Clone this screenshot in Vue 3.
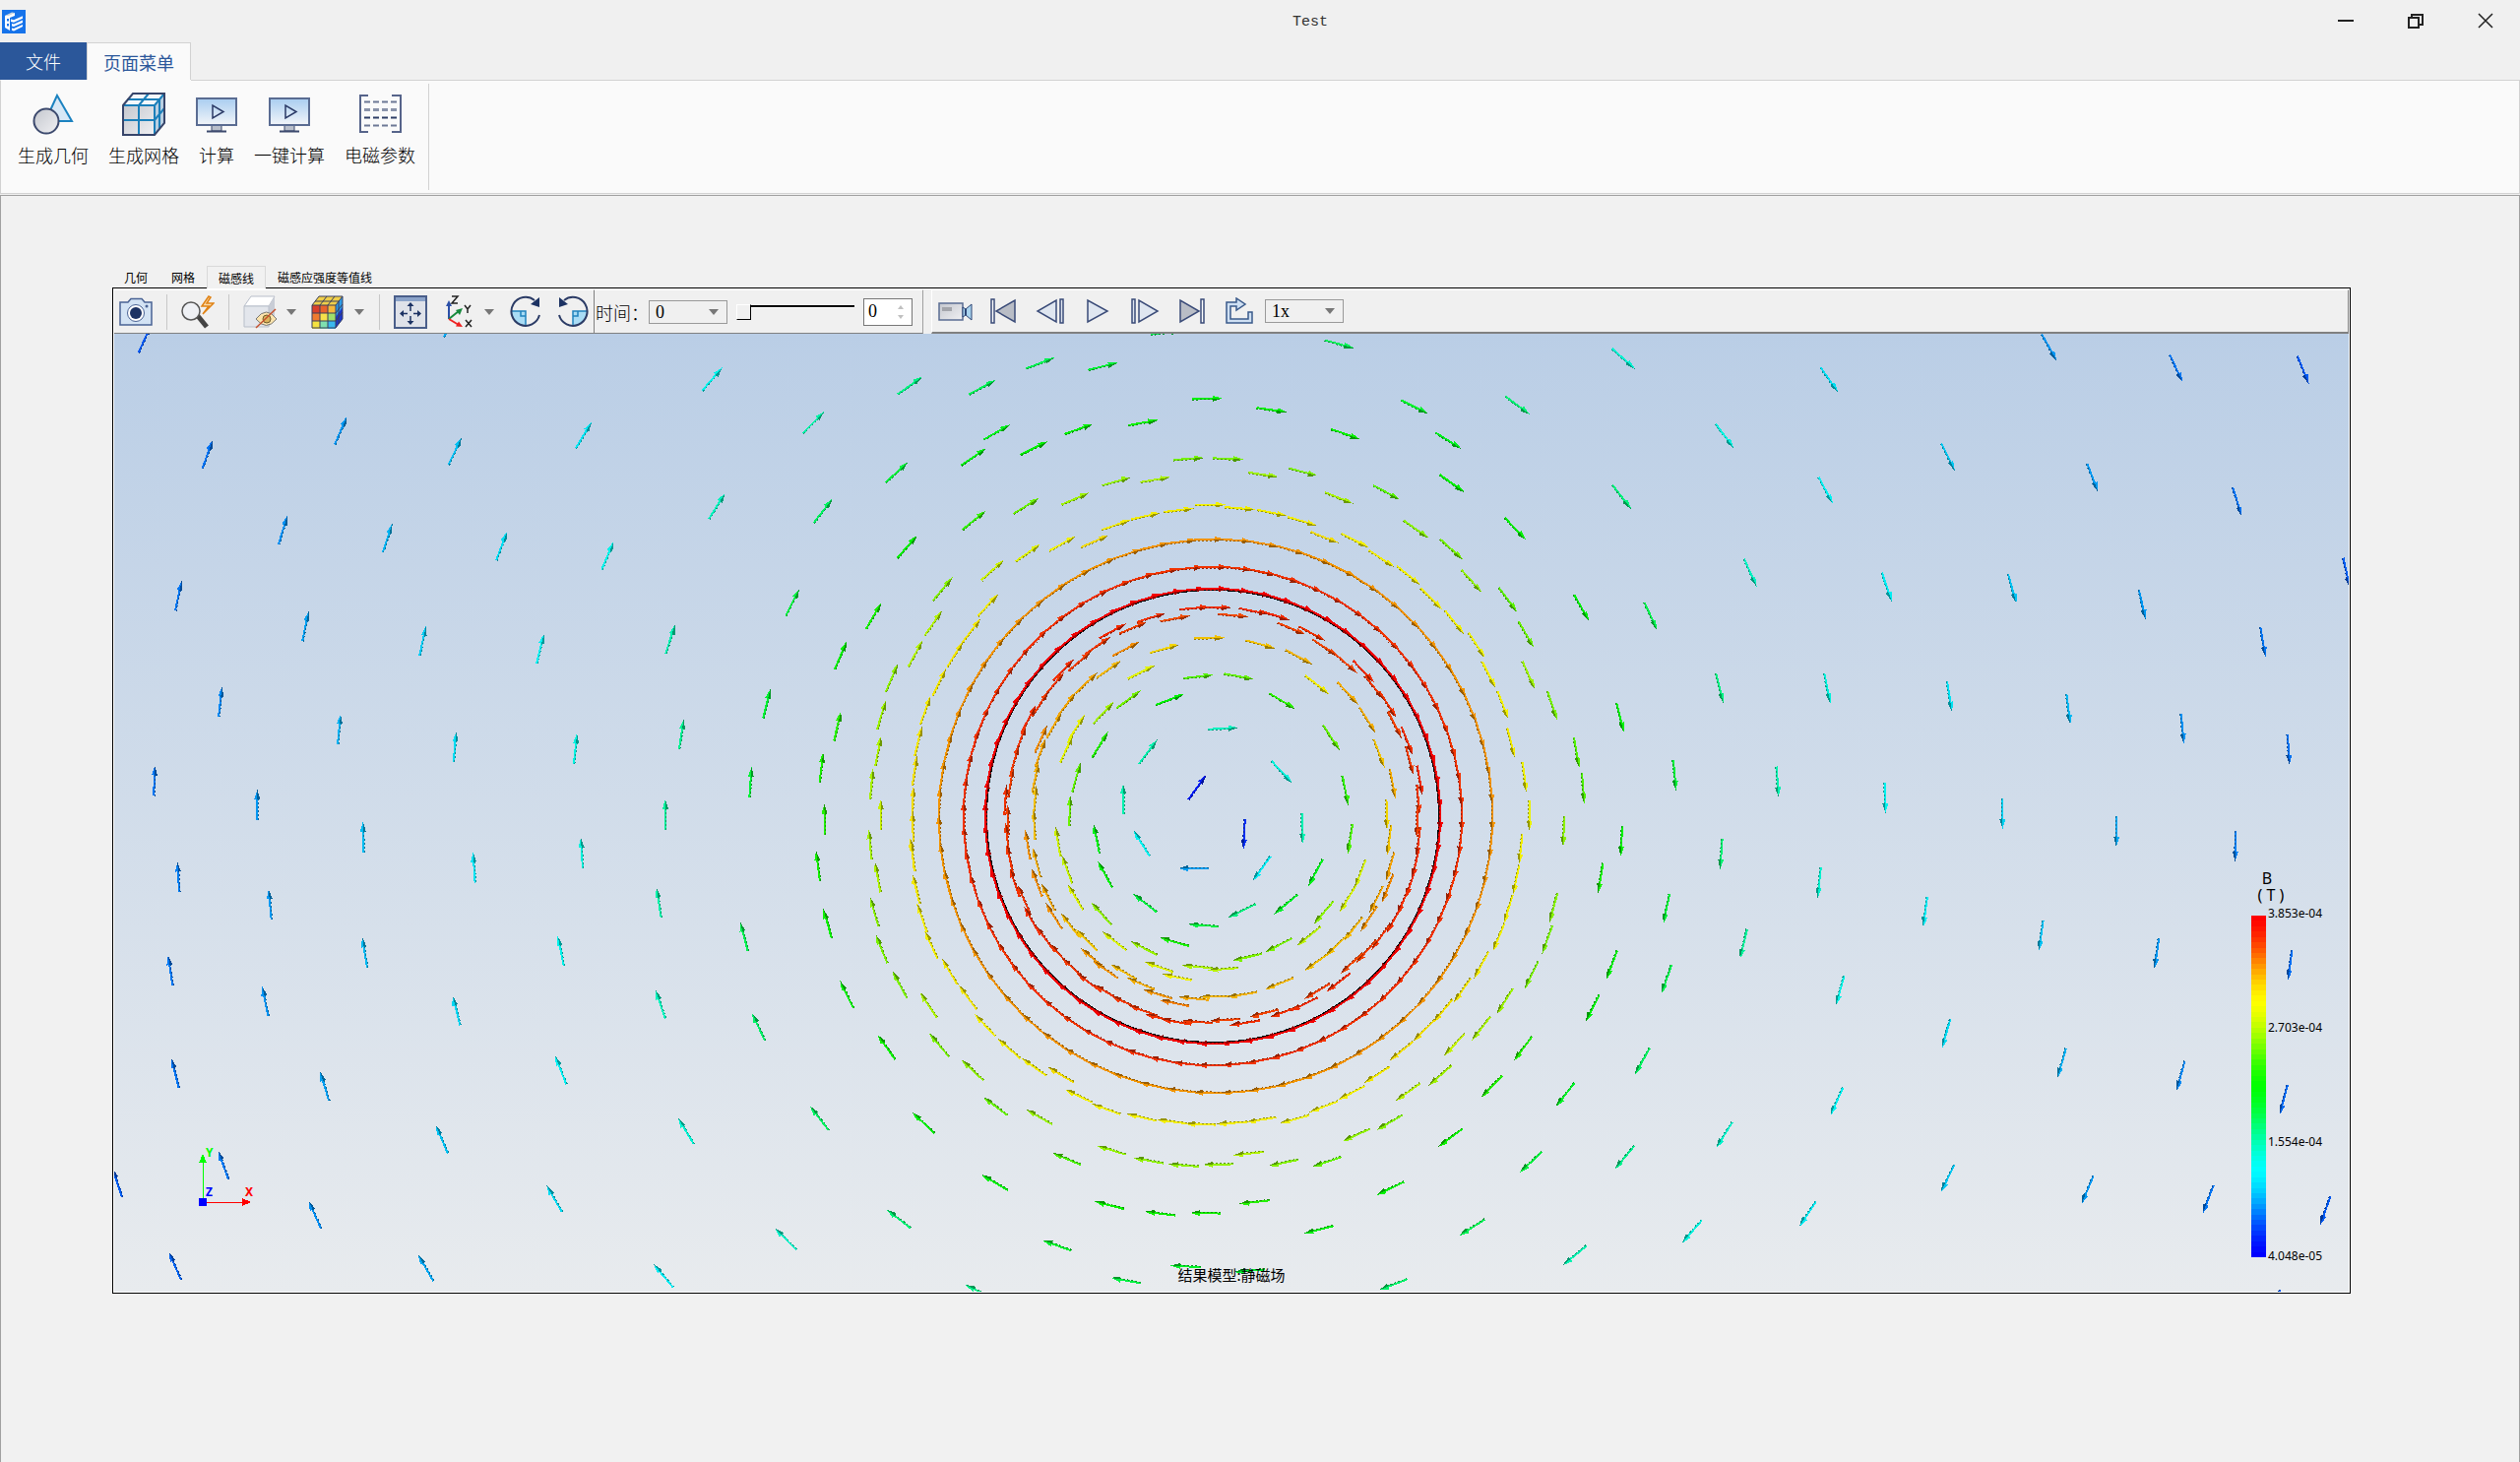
<script setup>
import { ref } from 'vue'

const tabs = ['几何', '网格', '磁感线', '磁感应强度等值线']
const activeTab = ref('磁感线')
const time = ref('0')
const frame = ref(0)
const speed = ref('1x')

const CX = 1232
const CY = 829
const CORE = 231
const B_MAX = 3.853
const B_MIN = 0.405

const stops = [[0, 0, 255], [0, 255, 255], [0, 255, 0], [255, 255, 0], [255, 0, 0]]

function ramp(v, shade = 1) {
  const t = Math.min(0.9999, Math.max(0, v)) * 4
  const i = Math.floor(t)
  const f = (t - i + (1 - Math.cos(Math.PI * (t - i))) / 2) / 2
  const c = stops[i].map((a, k) => Math.round((a + (stops[i + 1][k] - a) * f) * shade))
  return `rgb(${c.join(',')})`
}

// Flux density of a round conductor: grows inside, falls off as 1/r outside,
// with a slightly flattened peak at the surface.
function level(r) {
  const b = r < CORE ? (B_MAX * r) / CORE : (B_MAX * CORE) / r
  const v = (b - B_MIN) / (B_MAX - B_MIN)
  return v > 0.5 ? v + 0.055 * Math.sin(Math.PI * (v - 0.5) * 2) : v
}

function arrow(x, y, deg, cx = CX) {
  const dx = x - cx
  const dy = y - CY
  const a = deg === undefined ? (Math.atan2(dx, -dy) * 180) / Math.PI : deg
  const v = level(Math.hypot(dx, dy))
  return {
    at: `translate(${x.toFixed(1)} ${y.toFixed(1)}) rotate(${a.toFixed(1)})`,
    lit: ramp(v, 0.95),
    dark: ramp(v, 0.6)
  }
}

const rings = [
  { r: 281, n: 63, cx: 1235 },
  { r: 253, n: 64, cx: 1232 },
  { r: 231, n: 64, cx: 1232 }
]

// Sample points by patch: x, y pairs relative to the patch origin.
const patches = [
  {
    x: 880, y: 450, k: 1 / 3,
    pts: [92, 90, 326, 43, 510, 16, 982, 48, 328, 236, 487, 192, 636, 170, 762, 117, 880, 112, 124, 317, 22, 528,
      232, 446, 204, 550, 149, 643, 77, 717, 46, 830, 36, 940, 16, 1040, 44, 1133, 12, 1225, 384, 388, 492, 335,
      597, 307, 695, 300, 760, 250, 850, 223, 950, 205, 370, 495, 320, 572, 270, 645, 222, 730, 180, 815, 158, 910,
      147, 1000, 142, 1095, 142, 1170, 140, 1250, 868, 532, 812, 563, 940, 535, 1000, 503, 750, 573, 705, 617,
      650, 665, 600, 692, 573, 735, 530, 795, 495, 840, 470, 905, 452, 965, 440, 1035, 424, 1090, 432, 1150,
      430, 1205, 790, 628, 738, 690, 670, 732, 610, 797, 572, 860, 532, 903, 530, 945, 515, 1020, 514, 1090,
      512, 1165, 492, 1225, 908, 627, 838, 698, 640, 868, 610, 933, 1010, 712, 924, 782, 798, 782, 722, 823,
      712, 920, 640, 1020, 620, 1122, 584, 1215, 702, 1207]
  },
  {
    x: 1220, y: 450, k: 1 / 3,
    pts: [82, 48, 188, 96, 310, 88, 420, 167, 565, 150, 764, 122, 655, 262, 763, 323, 957, 260, 824, 420, 935, 477,
      991, 583, 998, 706, 1070, 798, 27, 188, 118, 199, 215, 212, 308, 238, 376, 287, 468, 296, 550, 352, 632, 403,
      702, 474, 772, 545, 840, 615, 877, 705, 920, 797, 945, 912, 986, 1017, 1001, 1133, 45, 501, 97, 525,
      160, 512, 225, 525, 275, 565, 338, 580, 378, 623, 440, 670, 495, 695, 528, 745, 570, 797, 590, 857, 628, 906,
      636, 967, 667, 1027, 662, 1085, 659, 1155, 663, 1215, 25, 594, 180, 613, 298, 652, 353, 736, 447, 762,
      507, 843, 543, 945, 584, 1037, 566, 1130, 574, 1210, 115, 711, 247, 786, 397, 897, 440, 1058, 455, 1205]
  },
  {
    x: 880, y: 830, k: 1 / 3,
    pts: [35, 185, 25, 290, 47, 403, 103, 512, 190, 573, 223, 695, 325, 772, 395, 882, 528, 914, 62, 702, 175, 932,
      612, 1042, 748, 1015, 862, 1047, 968, 1061, 393, 1114, 742, 1183, 897, 1208, 1035, 1207, 583, 1306, 100, 1225,
      975, 1369, 792, 1412, 345, 1446, 142, 120, 152, 220, 170, 308, 198, 390, 255, 472, 310, 550, 363, 635,
      435, 705, 512, 762, 593, 785, 648, 850, 732, 890, 840, 915, 932, 928, 1020, 936, 438, 130, 452, 200, 480, 250,
      505, 315, 545, 370, 590, 420, 630, 460, 680, 505, 735, 535, 790, 565, 845, 590, 895, 612, 945, 624, 1010, 624,
      520, 140, 520, 200, 555, 245, 572, 302, 622, 330, 672, 375, 690, 430, 730, 465, 785, 472, 838, 508, 890, 540,
      940, 567, 1000, 553, 1065, 547, 612, 160, 638, 245, 717, 295, 757, 378, 847, 400, 893, 457, 948, 488,
      1010, 456, 940, 380, 1030, 330, 728, 175, 850, 262]
  },
  {
    x: 1220, y: 830, k: 1 / 3,
    pts: [350, 168, 260, 265, 238, 390, 142, 427, 375, 290, 330, 362, 70, 463, 486, 172, 447, 250, 465, 340, 415, 390,
      355, 440, 240, 507, 127, 541, 577, 150, 570, 215, 535, 250, 512, 310, 655, 140, 640, 200, 617, 255, 590, 310,
      548, 365, 505, 408, 460, 445, 420, 503, 355, 530, 315, 570, 255, 593, 192, 598, 135, 627, 75, 618, 975, 95,
      961, 190, 937, 280, 908, 365, 855, 450, 797, 527, 738, 590, 680, 650, 612, 712, 537, 785, 460, 840, 375, 882,
      287, 920, 185, 922, 95, 932, 1075, 275, 1056, 372, 1008, 480, 927, 560, 855, 643, 773, 693, 730, 787, 632, 837,
      576, 930, 475, 968, 385, 1050, 253, 1053, 147, 1025, 55, 1058, 982, 705, 887, 820, 762, 976, 1007, 1050,
      578, 1131, 164, 1173, 360, 1257, 827, 1250, 587, 1424, 150, 1382]
  },
  {
    x: 0, y: 0, k: 80 / 49,
    pts: [90, 211, 129, 283, 212, 268, 283, 281, 363, 271, 443, 236, 506, 263, 281, 202, 176, 330, 241, 335, 312, 340,
      378, 346, 446, 315, 512, 318, 111, 371, 190, 390, 263, 399, 336, 404, 417, 398, 493, 375, 137, 437, 211, 454,
      283, 465, 358, 466, 424, 457, 477, 438, 521, 452, 96, 486, 160, 501, 226, 521, 295, 540, 362, 531, 414, 507,
      467, 487, 511, 478, 513, 510, 523, 408, 111, 546, 168, 563, 106, 604, 165, 623, 227, 593, 284, 629, 349, 592,
      410, 562, 463, 583, 411, 625, 472, 639, 509, 539, 515, 575, 527, 619, 349, 666, 202, 676, 109, 668, 275, 709,
      427, 704, 510, 696, 345, 746, 489, 771, 265, 789, 413, 794, 73, 736, 139, 725, 196, 756, 109, 788, 566, 240,
      611, 241, 647, 226, 686, 228, 725, 207, 833, 214, 751, 248, 791, 255, 711, 263, 671, 267, 620, 269, 880, 253,
      837, 270, 944, 252, 1010, 223, 901, 274, 1138, 236, 1275, 216, 1354, 229, 1433, 230, 1073, 271, 1212, 284,
      1302, 297, 1392, 312, 1136, 305, 1009, 309, 1089, 356, 1174, 365, 1252, 366, 1333, 376, 1460, 356, 1408, 399,
      984, 378, 1027, 383, 1070, 428, 1137, 428, 1213, 433, 1287, 441, 1358, 453, 1424, 466, 1008, 446, 981, 468,
      1042, 482, 1106, 486, 1173, 496, 1246, 506, 1317, 517, 1391, 526, 985, 490, 1009, 523, 1071, 531, 973, 517,
      996, 546, 1132, 549, 1198, 567, 1270, 582, 1342, 593, 1425, 600, 1037, 565, 1085, 587, 1145, 616, 1211, 643,
      1283, 661, 1357, 669, 1421, 684, 1037, 609, 1003, 600, 991, 627, 1022, 660, 974, 681, 1143, 685, 1073, 706,
      1011, 720, 1212, 733, 1299, 740, 1374, 746, 1447, 753, 1125, 755, 1053, 766, 980, 781, 1415, 811]
  }
]

// Near the axis the direction no longer follows the circles.
const core = [
  [1216, 800, -54], [1166, 764, -53], [1141, 812, -90], [1160, 857, -122], [1242, 740, -3], [1302, 784, 47],
  [1323, 841, 89], [1264, 847, 93], [1282, 882, 126], [1262, 925, 154], [1213, 882, 180]
]

const arrows = []
for (const { r, n, cx } of rings) {
  for (let i = 0; i < n; i++) {
    const a = (i * 2 * Math.PI) / n
    arrows.push(arrow(cx + r * Math.cos(a), CY + r * Math.sin(a), undefined, cx))
  }
}
for (const { x, y, k, pts } of patches) {
  for (let i = 0; i < pts.length; i += 2) arrows.push(arrow(x + pts[i] * k, y + pts[i + 1] * k))
}
for (const [x, y, deg] of core) arrows.push(arrow(x, y, deg))

const BANDS = 64
const bands = Array.from({ length: BANDS }, (_, i) => ({
  y: 930 + Math.round((i * 347) / BANDS),
  h: Math.round(((i + 1) * 347) / BANDS) - Math.round((i * 347) / BANDS),
  fill: ramp(1 - i / (BANDS - 1))
}))
const ticks = [
  { y: 932, text: '3.853e-04' },
  { y: 1048, text: '2.703e-04' },
  { y: 1164, text: '1.554e-04' },
  { y: 1280, text: '4.048e-05' }
]

const heat = ['#d9402c', '#e8622c', '#f6b93b', '#ef7a30', '#f7e04a', '#9fe06a', '#f5e23f', '#7fe0b0', '#39b8ee']
const cells = heat.map((fill, i) => ({ x: 1 + (i % 3) * 8, y: 10 + Math.floor(i / 3) * 8, fill }))
</script>

<template>
  <div class="window">
    <header class="titlebar">
      <svg class="logo" width="24" height="24" viewBox="0 0 24 24">
        <rect width="24" height="24" fill="#1673ea" />
        <path d="M3 6 13 3v3L8 8l0 13-5-3z" fill="#fff" />
        <path d="M3 6l7-3.500 3 .5-6 3z" fill="#cfd6dc" />
        <path d="M5 9h2v2.500H5zM5 14h2v2.500H5z" fill="#1673ea" />
        <path d="M9 9.500l3 .8 9-4v2.500l-9 4-3-.8zM10 14l2 .6 9-4v2.500l-9 4-2-.6zM10 18.500l2 .6 9-4v2L12 21.500l-2-.8z" fill="#fff" />
      </svg>
      <h1>Test</h1>
      <div class="controls">
        <button type="button" aria-label="最小化">
          <svg width="18" height="18" viewBox="0 0 18 18"><path d="M1 8h16" stroke="#222" stroke-width="2" /></svg>
        </button>
        <button type="button" aria-label="还原">
          <svg width="18" height="18" viewBox="0 0 18 18" fill="none" stroke="#222" stroke-width="2">
            <path d="M2 5h10v10H2zM5 5V2h11v10h-4" />
          </svg>
        </button>
        <button type="button" aria-label="关闭">
          <svg width="18" height="18" viewBox="0 0 18 18"><path d="M2 1l14 14M16 1 2 15" stroke="#222" stroke-width="1.500" /></svg>
        </button>
      </div>
    </header>

    <nav class="menubar">
      <button type="button" class="menu-file">文件</button>
      <button type="button" class="menu-page">页面菜单</button>
      <span class="menu-rest"></span>
    </nav>

    <div class="ribbon">
      <div class="ribbon-group">
        <button type="button">
          <svg width="44" height="44" viewBox="0 0 44 44">
            <defs>
              <linearGradient id="gray" x1="0" y1="0" x2="1" y2="1">
                <stop offset="0" stop-color="#c4c7ce" /><stop offset="1" stop-color="#f0f0f3" />
              </linearGradient>
              <linearGradient id="sky" x1="0" y1="0" x2="0" y2="1">
                <stop offset="0" stop-color="#a9cdf0" /><stop offset="1" stop-color="#f2f5f9" />
              </linearGradient>
            </defs>
            <path d="M26 3 41 29H14z" fill="#d8e8f6" stroke="#1b82c0" stroke-width="2" />
            <circle cx="15" cy="29" r="12.500" fill="url(#gray)" stroke="#3d4a6e" stroke-width="2" />
          </svg>
          <span>生成几何</span>
        </button>
        <button type="button">
          <svg width="44" height="44" viewBox="0 0 44 44">
            <path d="M1 13 11 1h32L33 13z" fill="#f4f8fb" />
            <path d="M33 13 43 1v30L33 43z" fill="#b9cfe2" />
            <path d="M1 13h32v30H1z" fill="url(#gray)" />
            <path d="M1 13h32M5 7h33M17 13 27 1M17 13v30M1 28h32L43 16M33 13v30M33 13 43 1M38 7v30" fill="none" stroke="#1b7fba" stroke-width="2" />
            <path d="M1 13 11 1h32v30L33 43H1z" fill="none" stroke="#37456a" stroke-width="2" />
          </svg>
          <span>生成网格</span>
        </button>
        <button v-for="name in ['计算', '一键计算']" :key="name" type="button">
          <svg width="44" height="44" viewBox="0 0 44 44">
            <path d="M17 33h10v6H17z" fill="#b9bfcb" stroke="#3d4a6e" />
            <rect x="2" y="6" width="40" height="27" fill="url(#sky)" stroke="#5a6c92" stroke-width="2" />
            <path d="M18 13v13l11-6.500z" fill="none" stroke="#2b3a66" stroke-width="1.500" />
            <path d="M12 39.500h20" stroke="#3d4a6e" stroke-width="2" />
          </svg>
          <span>{{ name }}</span>
        </button>
        <button type="button">
          <svg width="44" height="44" viewBox="0 0 44 44" fill="none" stroke="#56648a">
            <path d="M10 3H2v37h8M34 3h9v37h-9" stroke-width="2" />
            <path d="M6 9.500h34M6 33.500h34" stroke-width="2" stroke-dasharray="6 3" stroke="#6d7895" />
            <path d="M6 17.500h34" stroke-width="3" stroke-dasharray="6 3" stroke="#8a93aa" />
            <path d="M6 25.500h34" stroke-width="2" stroke-dasharray="6 3" stroke="#2f3e66" />
          </svg>
          <span>电磁参数</span>
        </button>
      </div>
    </div>

    <main class="workspace">
      <div class="tabs" role="tablist">
        <button
          v-for="tab in tabs"
          :key="tab"
          type="button"
          role="tab"
          :aria-selected="tab === activeTab"
          :class="{ active: tab === activeTab }"
          @click="activeTab = tab"
        >{{ tab }}</button>
      </div>

      <section class="viewer">
        <div class="toolbar">
          <div class="bar bar-view">
            <button type="button" class="tool" aria-label="截图">
              <svg width="34" height="30" viewBox="0 0 34 30">
                <path d="M1 5h8l3-3.500h11L26 5h7v23H1z" fill="#d3e3f4" stroke="#4a6394" stroke-width="1.500" />
                <circle cx="17" cy="16" r="8.500" fill="#fff" stroke="#4a6394" />
                <circle cx="17" cy="16" r="6" fill="#1c3263" />
                <circle cx="28" cy="9" r="1.500" fill="#4a6394" />
              </svg>
            </button>
            <i class="sep"></i>
            <button type="button" class="tool" aria-label="快速查询">
              <svg width="34" height="34" viewBox="0 0 34 34">
                <path d="M17 21 26 32" stroke="#444" stroke-width="5" />
                <circle cx="10" cy="16" r="9" fill="#eef0f4" stroke="#555" stroke-width="1.500" />
                <path d="M28 1 21 11h7l-6 8 11-11h-7l4-6z" fill="#fbd9a8" stroke="#e08214" stroke-width="1.500" />
              </svg>
            </button>
            <i class="sep"></i>
            <button type="button" class="tool" aria-label="隐藏">
              <svg width="34" height="34" viewBox="0 0 34 34">
                <path d="M1 11 8 1h24l-6 10z" fill="#fff" stroke="#b9bfca" />
                <path d="M26 11 32 1v22l-6 9z" fill="#c9cdd6" />
                <path d="M1 11h25v21H1z" fill="#e3e6ec" stroke="#b9bfca" />
                <path d="M13 24q10.500-14 21 0-10.500 13-21 0z" fill="#fbe3ac" stroke="#777" />
                <circle cx="24" cy="24" r="4" fill="#dcb45c" stroke="#6d5a2c" />
                <path d="M13 33 33 14" stroke="#c5512e" stroke-width="1.500" />
              </svg>
            </button>
            <button type="button" class="caret" aria-label="隐藏选项"></button>
            <button type="button" class="tool gap-s" aria-label="云图">
              <svg width="34" height="34" viewBox="0 0 34 34">
                <path d="M1 10 8 1h24l-7 9z" fill="#f0cf4a" />
                <path d="M25 10 32 1v23l-7 9z" fill="#2f9be6" />
                <path d="M25 22 32 12v12l-7 9z" fill="#1d37c9" />
                <rect v-for="(c, i) in cells" :key="i" :x="c.x" :y="c.y" width="8" height="8" :fill="c.fill" />
                <path d="M1 10v23h24l7-9V1H8zM1 10h24V33M25 10l7-9M9 10l7-9M17 10l7-9M4 6h24v23M1 18h24l7-9M1 26h24l7-9M9 10v23M17 10v23" fill="none" stroke="#3b3f5c" />
              </svg>
            </button>
            <button type="button" class="caret" aria-label="云图选项"></button>
            <i class="sep tight"></i>
            <button type="button" class="tool" aria-label="适应窗口">
              <svg width="34" height="34" viewBox="0 0 34 34">
                <rect x="1" y="1" width="32" height="32" fill="#dfe2e9" stroke="#4a5e8a" stroke-width="2" />
                <path d="M2 4h30" stroke="#8ba3c9" stroke-width="4" />
                <path d="M17 9v7M17 21v7M7 18.500h7M20 18.500h7" stroke="#1c3263" stroke-width="1.500" />
                <path d="M17 7l-3.500 4h7zM17 30l-3.500-4h7zM6 18.500l4-3.500v7zM28 18.500l-4-3.500v7z" fill="#1c3263" />
              </svg>
            </button>
            <button type="button" class="tool gap" aria-label="视角">
              <svg width="34" height="34" viewBox="0 0 34 34">
                <path d="M8 24V8" stroke="#2a4fa8" stroke-width="2" /><path d="M8 5l-3 6h6z" fill="#2a4fa8" />
                <path d="M8 24 18 16" stroke="#178a3c" stroke-width="2" /><path d="M22 13l-3 7-4-5z" fill="#178a3c" />
                <path d="M8 24l10 6" stroke="#e22" stroke-width="2" /><path d="M22 32l-7-.5 3-5z" fill="#e22" />
                <path d="M11 1h6l-6 7h6M24 10l3 4 3-4M27 14v4M25 25l6 7M31 25l-6 7" fill="none" stroke="#222" stroke-width="1.500" />
              </svg>
            </button>
            <button type="button" class="caret" aria-label="视角选项"></button>
            <button type="button" class="tool gap-s" aria-label="顺时针旋转">
              <svg width="34" height="34" viewBox="0 0 34 34">
                <path d="M17 16v15A14 14 0 0 1 3 16z" fill="#a9dcf5" />
                <path d="M3 16h14v15M12 16v5h5" fill="none" stroke="#2182bd" stroke-width="1.500" />
                <path d="M26 5A14.500 14.500 0 1 0 31 20" fill="none" stroke="#2c3c66" stroke-width="2" />
                <path d="M31 2v10l-9-3z" fill="#1c3263" />
              </svg>
            </button>
            <button type="button" class="tool gap" aria-label="逆时针旋转">
              <svg width="34" height="34" viewBox="0 0 34 34">
                <path d="M17 16v15A14 14 0 0 0 31 16z" fill="#a9dcf5" />
                <path d="M31 16H17v15M22 16v5h-5" fill="none" stroke="#2182bd" stroke-width="1.500" />
                <path d="M8 5A14.500 14.500 0 1 1 3 20" fill="none" stroke="#2c3c66" stroke-width="2" />
                <path d="M3 2v10l9-3z" fill="#1c3263" />
              </svg>
            </button>
          </div>

          <div class="bar bar-time">
            <label for="time">时间：</label>
            <span class="combo">
              <select id="time" v-model="time"><option>0</option></select>
            </span>
            <input v-model="frame" class="slider" type="range" min="0" max="100" aria-label="时间滑块" />
            <span class="spin">
              <input v-model="frame" type="number" aria-label="帧" />
              <svg width="8" height="16" viewBox="0 0 8 16" fill="#c0c0c0"><path d="M4 1l3 4H1zM4 15l3-4H1z" /></svg>
            </span>
          </div>

          <div class="bar bar-play">
            <button type="button" class="play" aria-label="录像">
              <svg width="36" height="26" viewBox="0 0 36 26">
                <rect x="1" y="5" width="24" height="17" fill="url(#gray)" stroke="#5a6c92" stroke-width="1.500" />
                <rect x="4" y="9" width="10" height="4" fill="#a3a5ab" />
                <path d="M25 9l3 2 6-5v16l-6-5-3 2z" fill="#a9d3ee" stroke="#2c4474" />
                <path d="M28 11v6" stroke="#2c4474" stroke-width="2" />
              </svg>
            </button>
            <button type="button" class="play" aria-label="首帧">
              <svg width="28" height="26" viewBox="0 0 28 26" fill="#b9bdc6" stroke="#3a4b78" stroke-width="1.500">
                <path d="M2 1h3v24H2z" fill="#fff" /><path d="M26 2v22L7 13z" />
              </svg>
            </button>
            <button type="button" class="play" aria-label="上一帧">
              <svg width="30" height="26" viewBox="0 0 30 26" fill="#dfe6f0" stroke="#3a4b78" stroke-width="1.500">
                <path d="M25 1h3v24h-3zM21 2v22L2 13z" />
              </svg>
            </button>
            <button type="button" class="play" aria-label="播放">
              <svg width="24" height="26" viewBox="0 0 24 26" fill="#dfe6f0" stroke="#3a4b78" stroke-width="1.500">
                <path d="M2 2v22l20-11z" />
              </svg>
            </button>
            <button type="button" class="play" aria-label="下一帧">
              <svg width="30" height="26" viewBox="0 0 30 26" fill="#dfe6f0" stroke="#3a4b78" stroke-width="1.500">
                <path d="M2 1h3v24H2zM9 2v22l19-11z" />
              </svg>
            </button>
            <button type="button" class="play" aria-label="末帧">
              <svg width="28" height="26" viewBox="0 0 28 26" fill="#b9bdc6" stroke="#3a4b78" stroke-width="1.500">
                <path d="M23 1h3v24h-3z" fill="#fff" /><path d="M2 2v22l19-11z" />
              </svg>
            </button>
            <button type="button" class="play" aria-label="循环">
              <svg width="30" height="28" viewBox="0 0 30 28" fill="#cfe0f3" stroke="#3a5a8a" stroke-width="1.500">
                <path d="M2 5h10V1l9 6-9 6V9H6v13h18v-7h4v11H2z" />
              </svg>
            </button>
            <span class="combo">
              <select v-model="speed" aria-label="播放速度"><option>1x</option></select>
            </span>
          </div>
        </div>

        <svg class="scene" viewBox="116 339 2270 973" role="img" aria-label="静磁场">
          <circle :cx="CX" :cy="CY" r="230" fill="none" stroke="#000" stroke-width="2" shape-rendering="crispEdges" />
          <g shape-rendering="crispEdges">
            <g v-for="(a, i) in arrows" :key="i" :transform="a.at">
              <path d="M-15 0H9" :stroke="a.lit" stroke-width="2" />
              <path d="M-15 1H9" :stroke="a.dark" stroke-width="1" stroke-dasharray="2 2" />
              <path d="M6-3 16 0 6 1z" :fill="a.lit" />
              <path d="M6 3 16 0H6z" :fill="a.dark" />
            </g>
          </g>

          <g class="axes" shape-rendering="crispEdges">
            <path d="M206 1217V1180" stroke="#0f0" /><path d="M206 1172l4 9h-8z" fill="#0f0" />
            <path d="M210 1221.500h37" stroke="#f00" /><path d="M255 1221l-9 4v-8z" fill="#f00" />
            <rect x="202" y="1217" width="8" height="8" fill="#00f" />
            <text x="209" y="1175" fill="#0f0">Y</text>
            <text x="209" y="1215" fill="#00f">Z</text>
            <text x="249" y="1215" fill="#f00">X</text>
          </g>

          <g shape-rendering="crispEdges">
            <rect v-for="b in bands" :key="b.y" x="2287" :y="b.y" width="15" :height="b.h" :fill="b.fill" />
          </g>
          <g class="legend">
            <text class="unit" x="2303" y="898">B</text>
            <text class="unit" x="2307" y="915">( T )</text>
            <text v-for="t in ticks" :key="t.text" x="2304" :y="t.y">{{ t.text }}</text>
          </g>
          <text class="caption" x="1251" y="1301">结果模型:静磁场</text>
        </svg>
      </section>
    </main>
  </div>
</template>

<style>
body {
  margin: 0;
}
</style>

<style scoped>
.window {
  display: flex;
  flex-direction: column;
  min-height: 100vh;
  background: #f0f0f0;
  color: #000;
  font-family: "Noto Sans CJK SC", sans-serif;
  font-size: 18px;
  font-weight: 300;
}
button {
  margin: 0;
  padding: 0;
  border: 0;
  background: none;
  color: inherit;
  font: inherit;
}
svg {
  display: block;
}
.titlebar {
  display: grid;
  grid-template-columns: 1fr auto 1fr;
  align-items: center;
  height: 43px;
  padding-left: 2px;
}
h1 {
  margin: 2px 0 0 100px;
  color: #333;
  font: 15px "Liberation Mono", monospace;
}
.controls {
  display: flex;
  justify-content: flex-end;
}
.controls button {
  display: flex;
  justify-content: center;
  align-items: center;
  width: 71px;
  height: 41px;
}
.menubar {
  position: relative;
  display: flex;
  height: 38px;
}
.menu-file {
  width: 88px;
  background: #2b579a;
  color: #fff;
}
.menu-page {
  box-sizing: border-box;
  width: 106px;
  border: 1px solid #d2d2d2;
  border-bottom: 0;
  background: #fafafa;
  color: #2b579a;
  font-weight: 400;
}
.menu-rest {
  flex: 1;
  margin-bottom: -1px;
  border-bottom: 1px solid #d2d2d2;
}
.ribbon {
  box-sizing: border-box;
  display: flex;
  height: 116px;
  padding: 0 7px;
  border: 1px solid #d2d2d2;
  border-top-color: #fafafa;
  background: #fafafa;
}
.ribbon-group {
  display: flex;
  align-items: flex-start;
  margin: 3px 0;
  padding: 9px 3px 0 0;
  border-right: 1px solid #d2d2d2;
}
.ribbon-group button {
  display: flex;
  flex-direction: column;
  align-items: center;
  gap: 6px;
  padding: 0 10px;
}
.ribbon-group svg {
  margin: 0 -4px;
}
.ribbon-group span {
  line-height: 26px;
}
.workspace {
  flex: 1;
  margin-top: 1px;
  padding: 71px 171px 60px 113px;
  border: 1px solid #a0a0a0;
  border-bottom: 0;
  background: #f1f1f1;
}
.tabs {
  display: flex;
  height: 23px;
  margin-bottom: -1px;
}
.tabs button {
  padding: 0 12px;
  font-size: 12px;
  font-weight: 400;
}
.tabs .active {
  position: relative;
  padding: 0 11px;
  border: 1px solid #d9d9d9;
  border-bottom: 0;
  background: #f1f1f1;
}
.viewer {
  padding: 1px;
  border: 1px solid #000;
  background: #fff;
}
.toolbar {
  display: flex;
  height: 45px;
  background: #f0f0f0;
}
.bar {
  display: flex;
  align-items: center;
  box-sizing: border-box;
  border-top: 1px solid #fff;
  border-bottom: 1px solid #808080;
}
.bar-view {
  width: 488px;
  padding-left: 5px;
  border-right: 1px solid #808080;
}
.tool {
  display: flex;
  justify-content: center;
  width: 34px;
}
.gap {
  margin-left: 14px;
}
.gap-s {
  margin-left: 5px;
}
.sep {
  width: 1px;
  height: 36px;
  margin: 0 14px;
  background: #c8c8c8;
}
.sep.tight {
  margin-left: 5px;
}
.caret {
  width: 30px;
  height: 34px;
}
.caret::before,
.combo::after {
  content: "";
  display: block;
  width: 0;
  margin: auto;
  border: 5px solid transparent;
  border-top: 6px solid #777;
  border-bottom: 0;
}
.bar-time {
  width: 334px;
  padding-left: 1px;
  border-right: 1px solid #a0a0a0;
}
.bar-time label {
  width: 54px;
  white-space: nowrap;
}
.combo {
  position: relative;
  display: block;
  height: 24px;
}
.combo::after {
  position: absolute;
  right: 9px;
  top: 9px;
  pointer-events: none;
}
select {
  box-sizing: border-box;
  display: block;
  width: 80px;
  height: 24px;
  padding: 0 6px;
  border: 1px solid #999;
  border-radius: 0;
  background: #f0f0f0;
  color: #000;
  font: 18px "Liberation Serif", serif;
  appearance: none;
}
.slider {
  width: 120px;
  height: 16px;
  margin: 0 9px;
  background: linear-gradient(#f0f0f0 1px, #000 1px, #000 3px, #fff 3px, #fff 4px, #f0f0f0 4px);
  appearance: none;
}
.slider::-webkit-slider-thumb {
  box-sizing: border-box;
  width: 15px;
  height: 16px;
  border: 1px solid;
  border-color: #fff #000 #000 #fff;
  background: #f0f0f0;
  appearance: none;
}
.spin {
  position: relative;
  display: block;
}
.spin input {
  box-sizing: border-box;
  display: block;
  width: 50px;
  height: 28px;
  padding: 0 4px;
  border: 1px solid #777;
  background: #fff;
  font: 18px "Liberation Serif", serif;
  appearance: textfield;
}
.spin input::-webkit-inner-spin-button {
  appearance: none;
}
.spin svg {
  position: absolute;
  right: 8px;
  top: 6px;
}
.bar-play {
  flex: 1;
  margin-left: 8px;
  border-left: 1px solid #fff;
  border-right: 1px solid #808080;
  border-bottom-width: 2px;
}
.play {
  display: flex;
  justify-content: center;
  width: 48px;
}
.bar-play .combo {
  margin-left: 2px;
}
.scene {
  width: 100%;
  height: auto;
  background: linear-gradient(#bacee6, #e8ebee);
}
.axes text {
  font: bold 12px "Noto Sans", sans-serif;
}
.legend text {
  font: 12px "Noto Sans", sans-serif;
}
.legend .unit {
  font-size: 16px;
  text-anchor: middle;
}
.caption {
  font-size: 15px;
  font-weight: 400;
  text-anchor: middle;
}
</style>
